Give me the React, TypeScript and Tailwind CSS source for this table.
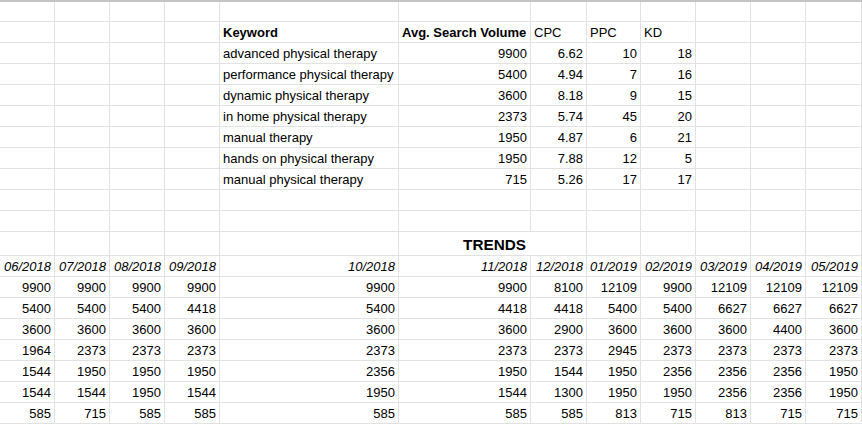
type Cell = { t?: string; r?: boolean; b?: boolean; i?: boolean; big?: boolean; noR?: boolean };

const cols =
  "grid grid-cols-[55px_55px_55px_55px_179px_132px_56px_54px_55px_55px_55px_56px]";

const keywords: [string, number, number, number, number][] = [
  ["advanced physical therapy", 9900, 6.62, 10, 18],
  ["performance physical therapy", 5400, 4.94, 7, 16],
  ["dynamic physical therapy", 3600, 8.18, 9, 15],
  ["in home physical therapy", 2373, 5.74, 45, 20],
  ["manual therapy", 1950, 4.87, 6, 21],
  ["hands on physical therapy", 1950, 7.88, 12, 5],
  ["manual physical therapy", 715, 5.26, 17, 17],
];

const months = [
  "06/2018", "07/2018", "08/2018", "09/2018", "10/2018", "11/2018",
  "12/2018", "01/2019", "02/2019", "03/2019", "04/2019", "05/2019",
];

const trends = [
  [9900, 9900, 9900, 9900, 9900, 9900, 8100, 12109, 9900, 12109, 12109, 12109],
  [5400, 5400, 5400, 4418, 5400, 4418, 4418, 5400, 5400, 6627, 6627, 6627],
  [3600, 3600, 3600, 3600, 3600, 3600, 2900, 3600, 3600, 3600, 4400, 3600],
  [1964, 2373, 2373, 2373, 2373, 2373, 2373, 2945, 2373, 2373, 2373, 2373],
  [1544, 1950, 1950, 1950, 2356, 1950, 1544, 1950, 2356, 2356, 2356, 1950],
  [1544, 1544, 1950, 1544, 1950, 1544, 1300, 1950, 1950, 2356, 2356, 1950],
  [585, 715, 585, 585, 585, 585, 585, 813, 715, 813, 715, 715],
];

const blank = (): Cell[] => Array.from({ length: 12 }, () => ({}));

function Row({ cells, h = "h-[21px]" }: { cells: Cell[]; h?: string }) {
  return (
    <div className={cols}>
      {cells.map((c, k) => (
        <div
          key={k}
          className={`${h} flex items-end border-b border-[#e2e2e3] pl-[3px] pb-[2px] overflow-visible whitespace-nowrap ${
            c.noR ? "" : "border-r"
          } ${c.r ? "justify-end" : "justify-start"} ${c.big ? "pr-[5px]" : "pr-[3px]"}`}
        >
          {c.t !== undefined && (
            <span
              className={`${c.big ? "text-[15.3px] leading-[17px]" : "text-[13px] leading-[15px]"} ${
                c.b ? "font-bold" : ""
              } ${c.i ? "italic" : ""}`}
            >
              {c.t}
            </span>
          )}
        </div>
      ))}
    </div>
  );
}

export default function App() {
  const header = blank();
  header[4] = { t: "Keyword", b: true };
  header[5] = { t: "Avg. Search Volume", b: true };
  header[6] = { t: "CPC" };
  header[7] = { t: "PPC" };
  header[8] = { t: "KD" };

  const kwRows = keywords.map(([k, v, cpc, ppc, kd]) => {
    const row = blank();
    row[4] = { t: k };
    row[5] = { t: String(v), r: true };
    row[6] = { t: cpc.toFixed(2), r: true };
    row[7] = { t: String(ppc), r: true };
    row[8] = { t: String(kd), r: true };
    return row;
  });

  const trendsTitle = blank();
  trendsTitle[5] = { t: "TRENDS", b: true, r: true, big: true, noR: true };

  const dateRow: Cell[] = months.map((m) => ({ t: m, r: true, i: true }));
  const trendRows: Cell[][] = trends.map((r) => r.map((n) => ({ t: String(n), r: true })));

  return (
    <div className="w-[862px] h-[424px] bg-white text-black font-['Liberation_Sans',Arial,sans-serif] overflow-hidden">
      <div className="border-t-2 border-[#c4c4c4]">
        <Row cells={blank()} h="h-[20px]" />
        <Row cells={header} />
        {kwRows.map((r, i) => (
          <Row key={i} cells={r} />
        ))}
        <Row cells={blank()} />
        <Row cells={blank()} />
        <Row cells={trendsTitle} h="h-[24px]" />
        <Row cells={dateRow} />
        {trendRows.map((r, i) => (
          <Row key={i} cells={r} />
        ))}
      </div>
    </div>
  );
}
